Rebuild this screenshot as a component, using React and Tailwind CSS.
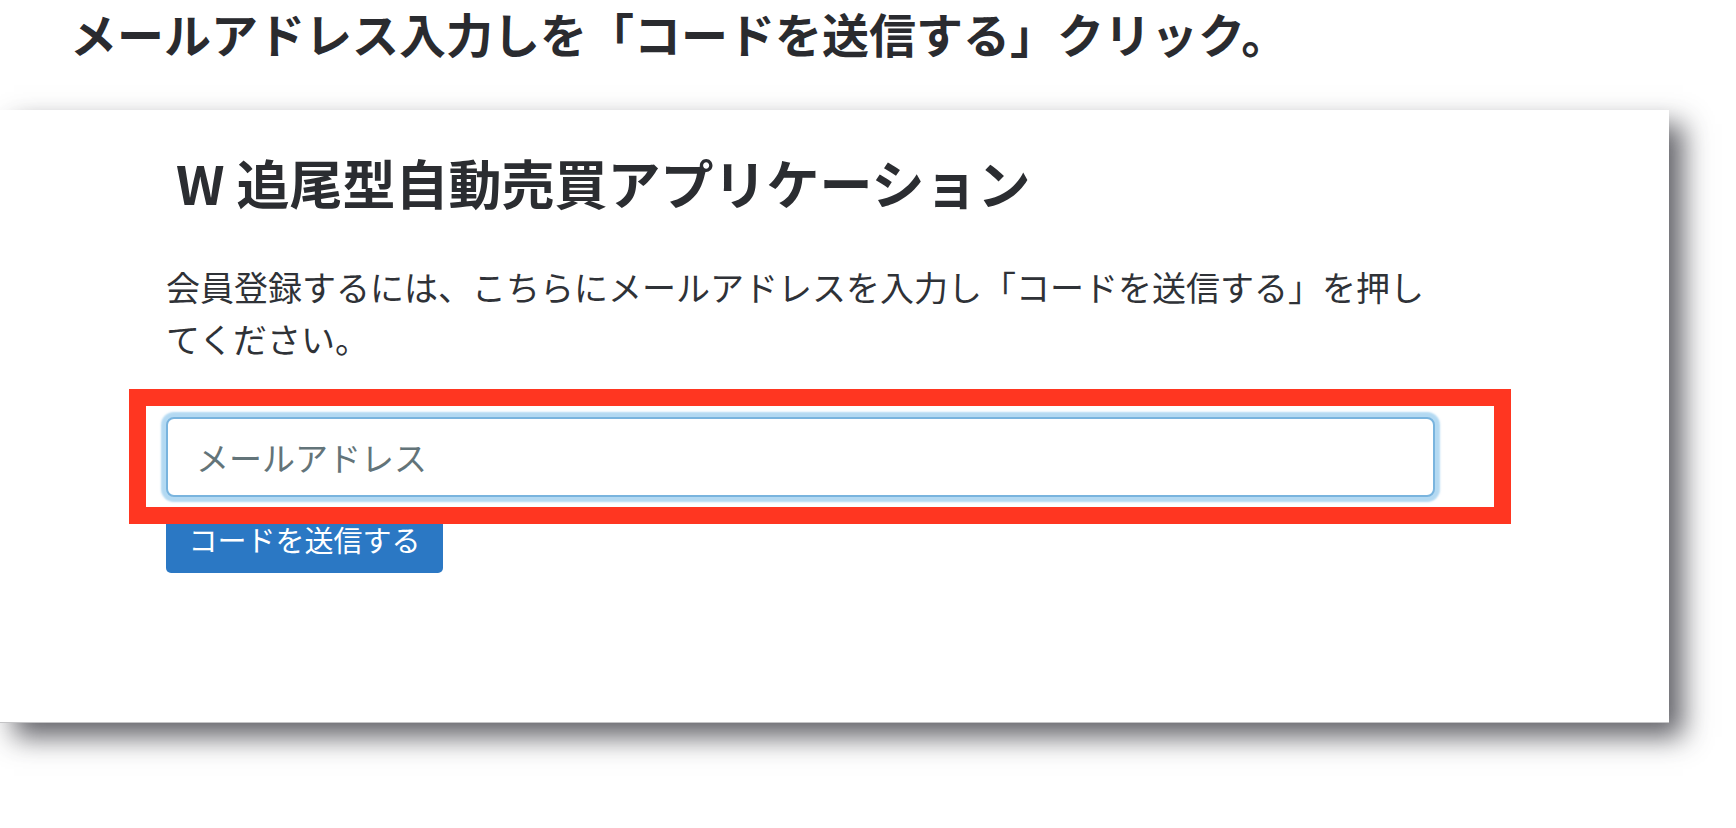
import { useState } from "react";

const FONT = { fontFamily: '"Noto Sans CJK JP", "Noto Sans", sans-serif' };

function SignupCard() {
    const [email, setEmail] = useState("");

    return (
        <div className="w-[1669px] bg-white border-b border-[#c4c4c6] pt-[45px] pb-[149px] pl-[166px] shadow-[14px_14px_26px_rgba(38,38,46,0.72)]">
            <h1 className="ml-[10px] text-[53px] leading-[54px] font-bold text-[#2b2d31]">
                W 追尾型自動売買アプリケーション
            </h1>

            <p className="mt-[52px] w-[1269px] text-[34px] leading-[52px] text-[#2f3237]">
                会員登録するには、こちらにメールアドレスを入力し「コードを送信する」を押してください。
            </p>

            <div className="relative mt-[52px] w-[1269px]">
                <input
                    type="email"
                    value={email}
                    onChange={(e) => setEmail(e.target.value)}
                    placeholder="メールアドレス"
                    style={FONT}
                    className="block h-[80px] w-full rounded-[8px] border-2 border-[#79b4de] bg-white px-[28px] text-[33px] text-[#2f3237] outline-none shadow-[0_0_2px_5px_rgba(128,192,234,0.6)] placeholder:text-[#637479]"
                />
                {/* annotation frame around the field */}
                <div className="pointer-events-none absolute left-[-37px] top-[-28px] z-10 h-[135px] w-[1382px] border-[17px] border-[#ff3621]" />
            </div>

            <button
                type="button"
                style={FONT}
                className="mt-[10px] flex h-[66px] w-[277px] items-center justify-center rounded-[5px] bg-[#2b78c4] text-[29px] text-white"
            >
                コードを送信する
            </button>
        </div>
    );
}

export default function App() {
    return (
        <div style={FONT} className="min-h-[828px] w-[1736px] bg-white overflow-hidden">
            <div className="pt-[8px] pl-[70px] text-[47px] leading-[50px] font-bold text-[#2a2b2f]">
                メールアドレス入力しを「コードを送信する」クリック。
            </div>

            <div className="mt-[52px]">
                <SignupCard />
            </div>
        </div>
    );
}
